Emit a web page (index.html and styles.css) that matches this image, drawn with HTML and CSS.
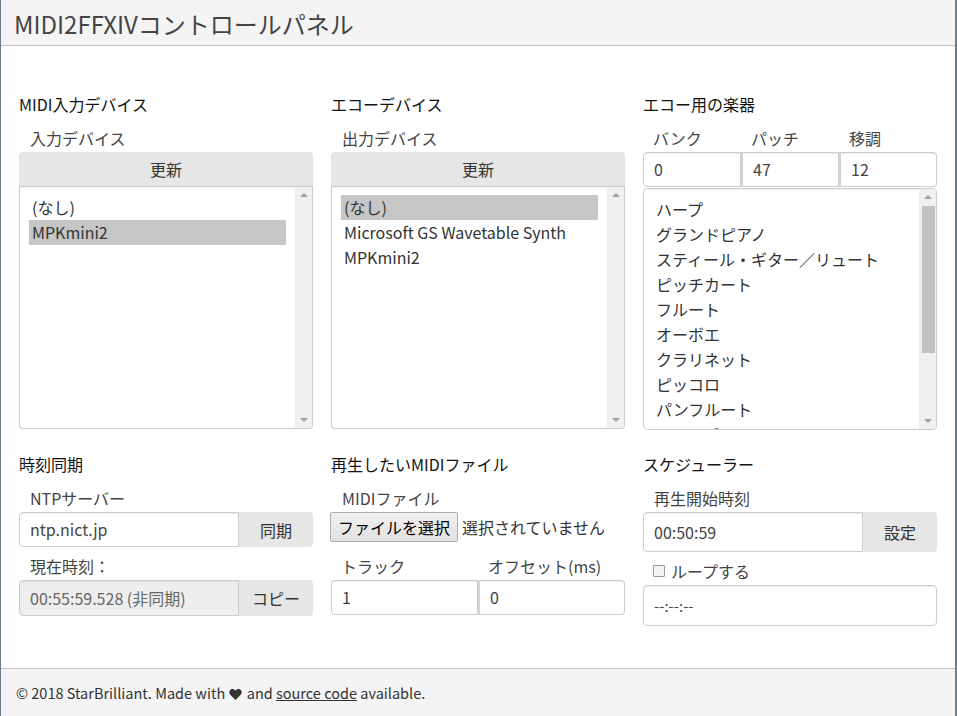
FILE: index.html
```html
<!DOCTYPE html>
<html lang="ja">
<head>
<meta charset="utf-8">
<title>MIDI2FFXIVコントロールパネル</title>
<link rel="stylesheet" href="styles.css">
</head>
<body>
<div class="window">
  <header class="topbar">
    <h1 class="title">MIDI2FFXIVコントロールパネル</h1>
  </header>
  <main class="main">
    <section class="panel">
      <h2 class="heading">MIDI入力デバイス</h2>
      <div class="label">入力デバイス</div>
      <button class="refresh">更新</button>
      <div class="listbox">
        <div class="options">
          <div class="opt">(なし)</div>
          <div class="opt selected">MPKmini2</div>
        </div>
        <div class="scrollbar"><span class="arrow up"></span><span class="track"></span><span class="arrow down"></span></div>
      </div>
    </section>
    <section class="panel">
      <h2 class="heading">エコーデバイス</h2>
      <div class="label">出力デバイス</div>
      <button class="refresh">更新</button>
      <div class="listbox">
        <div class="options">
          <div class="opt selected">(なし)</div>
          <div class="opt">Microsoft GS Wavetable Synth</div>
          <div class="opt">MPKmini2</div>
        </div>
        <div class="scrollbar"><span class="arrow up"></span><span class="track"></span><span class="arrow down"></span></div>
      </div>
    </section>
    <section class="panel">
      <h2 class="heading">エコー用の楽器</h2>
      <div class="triple-labels">
        <div class="label">バンク</div>
        <div class="label">パッチ</div>
        <div class="label">移調</div>
      </div>
      <div class="triple-inputs">
        <div class="field first">0</div>
        <div class="field">47</div>
        <div class="field last">12</div>
      </div>
      <div class="listbox instruments">
        <div class="options">
          <div class="opt">ハープ</div>
          <div class="opt">グランドピアノ</div>
          <div class="opt">スティール・ギター／リュート</div>
          <div class="opt">ピッチカート</div>
          <div class="opt">フルート</div>
          <div class="opt">オーボエ</div>
          <div class="opt">クラリネット</div>
          <div class="opt">ピッコロ</div>
          <div class="opt">パンフルート</div>
          <div class="opt">ティンパニ</div>
        </div>
        <div class="scrollbar"><span class="arrow up"></span><span class="track"><span class="thumb"></span></span><span class="arrow down"></span></div>
      </div>
    </section>

    <section class="panel">
      <h2 class="heading">時刻同期</h2>
      <div class="label">NTPサーバー</div>
      <div class="group">
        <div class="field grow">ntp.nict.jp</div>
        <button class="addon">同期</button>
      </div>
      <div class="label gap-top">現在時刻：</div>
      <div class="group tall">
        <div class="field grow disabled">00:55:59.528 (非同期)</div>
        <button class="addon">コピー</button>
      </div>
    </section>
    <section class="panel">
      <h2 class="heading">再生したいMIDIファイル</h2>
      <div class="label">MIDIファイル</div>
      <div class="file-row">
        <button class="file-btn">ファイルを選択</button>
        <span class="file-none">選択されていません</span>
      </div>
      <div class="double-labels">
        <div class="label">トラック</div>
        <div class="label">オフセット(ms)</div>
      </div>
      <div class="double-inputs">
        <div class="field first">1</div>
        <div class="field last">0</div>
      </div>
    </section>
    <section class="panel">
      <h2 class="heading">スケジューラー</h2>
      <div class="label">再生開始時刻</div>
      <div class="group big">
        <div class="field grow">00:50:59</div>
        <button class="addon">設定</button>
      </div>
      <div class="check-row">
        <span class="checkbox"></span>
        <span class="check-text">ループする</span>
      </div>
      <div class="field big-field">--:--:--</div>
    </section>
  </main>
  <footer class="footer">
    <p class="footer-text">© 2018 StarBrilliant. Made with <svg class="heart" viewBox="0 0 14 12" width="13" height="11"><path d="M7 12 L1.3 6.2 C-0.4 4.4 0 1.6 2 0.5 C3.8 -0.4 5.8 0.3 7 2 C8.2 0.3 10.2 -0.4 12 0.5 C14 1.6 14.4 4.4 12.7 6.2 Z" fill="#333"/></svg> and <a class="link">source code</a> available.</p>
  </footer>
</div>
</body>
</html>
```

FILE: styles.css
```css
* { box-sizing: border-box; }
html, body { margin: 0; padding: 0; }
body {
  font-family: "Noto Sans CJK JP", "Noto Sans", sans-serif;
  color: #333;
  background: #fff;
}
.window {
  width: 957px;
  height: 716px;
  border-left: 1px solid #6e7b8c;
  border-right: 2px solid #6e7b8c;
  display: flex;
  flex-direction: column;
}
.topbar {
  height: 46px;
  background: #f4f4f4;
  border-bottom: 1px solid #c4c4c4;
  display: flex;
  align-items: center;
  padding-left: 13px;
}
.title {
  margin: 0;
  font-size: 24px;
  font-weight: 400;
  color: #444;
  line-height: 30px;
  position: relative;
  top: 1px;
}
.main {
  flex: 1;
  display: grid;
  grid-template-columns: 294px 294px 294px;
  grid-template-rows: 337px auto;
  column-gap: 18px;
  row-gap: 23px;
  padding: 47px 0 0 18px;
}
.panel { display: flex; flex-direction: column; }
.heading {
  margin: 0;
  font-size: 16px;
  font-weight: 400;
  color: #111;
  line-height: 22px;
  height: 22px;
}
.label {
  font-size: 16px;
  line-height: 22px;
  color: #444;
  padding-left: 11px;
  margin-top: 12px;
  margin-bottom: 3px;
}
.refresh {
  font-family: inherit;
  font-size: 16px;
  color: #333;
  height: 35px;
  background: #e6e6e6;
  border: none;
  border-radius: 4px 4px 0 0;
  padding: 0;
  border-bottom: 1px solid #ccc;
}
.listbox {
  height: 242px;
  border: 1px solid #ccc;
  border-top: none;
  border-radius: 0 0 4px 4px;
  display: flex;
  overflow: hidden;
  box-shadow: inset 0 1px 1px rgba(0,0,0,0.06);
}
.options {
  flex: 1;
  padding: 8px 9px 0 9px;
  overflow: hidden;
}
.opt {
  height: 25px;
  line-height: 25px;
  font-size: 16px;
  color: #333;
  padding-left: 3px;
  white-space: nowrap;
}
.opt.selected { background: #c6c6c6; }
.scrollbar {
  width: 17px;
  background: #f0f0f0;
  display: flex;
  flex-direction: column;
  align-items: center;
}
.arrow { width: 17px; height: 17px; position: relative; }
.arrow::after {
  content: "";
  position: absolute;
  left: 5px;
  width: 0; height: 0;
  border-left: 4px solid transparent;
  border-right: 4px solid transparent;
}
.arrow.up::after { top: 6px; border-bottom: 4px solid #a3a3a3; }
.arrow.down::after { top: 7px; border-top: 4px solid #a3a3a3; }
.track { flex: 1; width: 100%; display: flex; justify-content: center; }
.thumb { width: 13px; height: 147px; background: #c1c1c1; margin-left: 1px; }

.instruments { border-top: 1px solid #ccc; border-radius: 4px; margin-top: 1px; height: 243px; }
.instruments .options { padding-top: 8px; padding-left: 9px; }

.triple-labels, .triple-inputs { display: grid; grid-template-columns: 1fr 1fr 1fr; }
.double-labels, .double-inputs { display: grid; grid-template-columns: 1fr 1fr; }
.triple-labels .label, .double-labels .label { padding-left: 10px; }

.field {
  height: 35px;
  border: 1px solid #ccc;
  background: #fff;
  font-size: 16px;
  line-height: 33px;
  color: #444;
  padding-left: 10px;
  box-shadow: inset 0 1px 1px rgba(0,0,0,0.075);
  white-space: nowrap;
}
.triple-inputs .field { border-radius: 0; }
.field.first { border-radius: 4px 0 0 4px; }
.field.last { border-radius: 0 4px 4px 0; }
.triple-inputs .field + .field, .double-inputs .field + .field { border-left: 2px solid #d4d4d4; }

.group { display: flex; height: 35px; }
.group .field { border-radius: 4px 0 0 4px; height: 100%; }
.field.grow { flex: 1; }
.addon {
  width: 74px;
  font-family: inherit;
  font-size: 16px;
  color: #333;
  background: #e6e6e6;
  border: none;
  border-radius: 0 4px 4px 0;
  padding: 0;
}
.group.tall { height: 36px; }
.group.tall .field { line-height: 34px; }
.field.disabled { background: #eee; color: #666; }
.gap-top { margin-top: 8px; }

.file-row { display: flex; align-items: center; gap: 4px; margin-left: -1px; }
.file-btn {
  font-family: inherit;
  font-size: 16px;
  color: #000;
  height: 30px;
  width: 128px;
  padding: 0;
  border: 1px solid #adadad;
  border-radius: 2px;
  background: linear-gradient(#f0f0f0, #e1e1e1);
}
.file-none { font-size: 16px; color: #333; }
.double-labels .label { margin-top: 13px; }

.group.big { height: 40px; }
.group.big .field { line-height: 38px; }
.check-row { display: flex; align-items: center; height: 22px; margin-top: 8px; margin-bottom: 3px; padding-left: 10px; }
.checkbox {
  width: 12px; height: 12px;
  border: 1px solid #9a9a9a;
  border-radius: 1px;
  background: #f3f3f3;
  margin-right: 6px;
}
.check-text { font-size: 16px; color: #444; line-height: 22px; }
.big-field { height: 41px; line-height: 39px; border-radius: 4px; font-size: 15px; }

.footer {
  height: 48px;
  background: #f4f4f4;
  border-top: 1px solid #c4c4c4;
  padding-left: 15px;
  display: flex;
  align-items: center;
}
.footer-text {
  margin: 0;
  font-size: 14.5px;
  line-height: 22px;
  color: #333;
  white-space: nowrap;
}
.heart { margin: 0 1px; vertical-align: -1px; }
.link { text-decoration: underline; color: #333; }
```
